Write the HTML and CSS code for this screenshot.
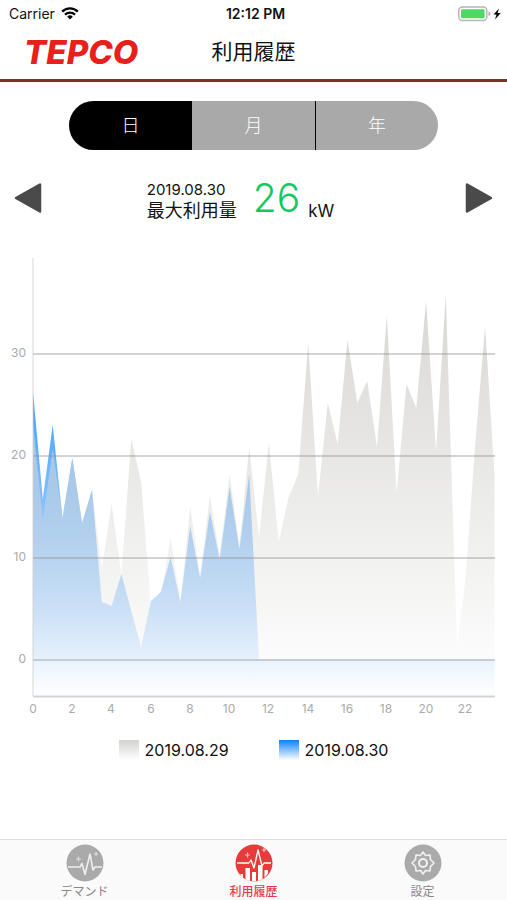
FILE: index.html
```html
<!DOCTYPE html>
<html lang="ja">
<head>
<meta charset="utf-8">
<meta name="viewport" content="width=device-width, initial-scale=1">
<title>利用履歴</title>
<link rel="stylesheet" href="styles.css">
</head>
<body>
<div class="status">
  <div class="status-side">Carrier
    <svg width="18" height="13" viewBox="0 0 18 13"><g fill="none" stroke="#000" stroke-width="2.3"><path d="M1.2 4.6a11 11 0 0 1 15.6 0"/><path d="M4 7.6a7.1 7.1 0 0 1 10 0"/></g><path d="M9 12.600l-2.800-2.900a4 4 0 0 1 5.600 0z"/></svg>
  </div>
  <div class="status-time">12:12 PM</div>
  <div class="status-side status-end">
    <svg width="44" height="16" viewBox="0 0 44 16"><rect x=".8" y="1" width="28" height="13.500" rx="3.500" fill="#fff" stroke="#b4b4b4" stroke-width="1.400"/><rect x="3" y="3.300" width="23.600" height="9" rx="1.200" fill="#4cd964"/><path d="M30.500 5.500q2 .5 2 2.300t-2 2.300z" fill="#aaa"/><path d="M41 2.500l-5.500 6h3l-1.500 5 5.800-6.500h-3.200z"/></svg>
  </div>
</div>
<header class="header">
  <div class="logo">TEPCO</div>
  <h1 class="title">利用履歴</h1>
</header>
<main class="main">
  <div class="segments">
    <button class="segment segment-on" type="button">日</button>
    <button class="segment" type="button">月</button>
    <button class="segment" type="button">年</button>
  </div>
  <section class="summary">
    <button class="arrow" type="button" aria-label="前の日"><svg width="28" height="32" viewBox="0 0 28 32"><path d="M2 16L26 2.500v27z" fill="#4a4a4a" stroke="#4a4a4a" stroke-width="2.500" stroke-linejoin="round"/></svg></button>
    <div class="reading">
      <div class="reading-label"><div class="date">2019.08.30</div><div class="name">最大利用量</div></div>
      <div class="value">26</div>
      <div class="unit">kW</div>
    </div>
    <button class="arrow" type="button" aria-label="次の日"><svg width="28" height="32" viewBox="0 0 28 32"><path d="M26 16L2 2.500v27z" fill="#4a4a4a" stroke="#4a4a4a" stroke-width="2.500" stroke-linejoin="round"/></svg></button>
  </section>
  <svg class="chart" viewBox="0 250 507 470" role="img" aria-label="利用履歴">
    <defs>
      <linearGradient id="blue" gradientUnits="userSpaceOnUse" x1="0" y1="295" x2="0" y2="696"><stop offset="0" stop-color="#007dff"/><stop offset="1" stop-color="#007dff" stop-opacity="0"/></linearGradient>
      <linearGradient id="grey" gradientUnits="userSpaceOnUse" x1="0" y1="295" x2="0" y2="659"><stop offset="0" stop-color="#d8d7d4"/><stop offset="1" stop-color="#d8d7d4" stop-opacity=".08"/></linearGradient>
    </defs>
    <path fill="url(#blue)" d="M33 696V392L42.800 499 52.700 425 62.500 518 72.300 458 82.100 523 92 490 101.800 602 111.600 606 121.400 574 131.300 611 141.100 647 150.900 601 160.800 592 170.600 557 180.400 602 190.200 526 200.100 578 209.900 512 219.700 559 229.600 487 239.400 549 249.200 474 259 659.500H494.500V696z"/>
    <path fill="url(#grey)" d="M33 659.500V423L42.800 520 52.700 449 62.500 518 72.300 459 82.100 523 92 491 101.800 568 111.600 504 121.400 575 131.300 439 141.100 482 150.900 605 160.800 596 170.600 538 180.400 600 190.200 507 200.100 575 209.900 496 219.700 555 229.600 475 239.400 545 249.200 448 259 537 268.900 443 278.700 542 288.500 498 298.300 474 308.200 343 318 497 327.800 403 337.700 444 347.500 340 357.300 403 367.200 381 377 447 386.800 316 396.600 493 406.500 384 416.300 408 426.100 301 436 451 445.800 295 457 647 465.400 580 475.300 443 485.100 327 494.500 475V659.500z"/>
    <g class="grid"><path d="M33 354H495M33 456H495M33 558H495M33 660H495M33 696.500H495"/><path class="axis" d="M33 258V696"/></g>
    <g class="ticks ticks-y"><text x="26" y="357">30</text><text x="26" y="459">20</text><text x="26" y="561">10</text><text x="26" y="663">0</text></g>
    <g class="ticks ticks-x"><text x="33" y="713">0</text><text x="72" y="713">2</text><text x="111" y="713">4</text><text x="151" y="713">6</text><text x="190" y="713">8</text><text x="229" y="713">10</text><text x="268" y="713">12</text><text x="308" y="713">14</text><text x="347" y="713">16</text><text x="386" y="713">18</text><text x="426" y="713">20</text><text x="465" y="713">22</text></g>
  </svg>
  <div class="legend">
    <div class="key"><span class="swatch swatch-grey"></span>2019.08.29</div>
    <div class="key"><span class="swatch swatch-blue"></span>2019.08.30</div>
  </div>
</main>
<nav class="tabs">
  <a class="tab" href="#demand">
    <svg width="38" height="38" viewBox="0 0 38 38"><circle cx="19" cy="19" r="18.500" fill="#aaa"/><path d="M2 23H14l2-3.500 3 11L24 10l3 16 2-3H36" fill="none" stroke="#eee" stroke-width="1.600" stroke-linejoin="round"/><path d="M10 15h5M12.500 12.500v5M28 10h4M30 8v4" stroke="#ddd" stroke-width="1.200"/></svg>
    デマンド</a>
  <a class="tab tab-on" href="#history">
    <svg width="38" height="38" viewBox="0 0 38 38"><circle cx="19" cy="19" r="18.500" fill="#e73b3b"/><path d="M2 19H14l2-3 3 8L23 6l4 16 2-3H36" fill="none" stroke="#fff" stroke-width="1.300" stroke-linejoin="round"/><path d="M5.500 31.500V30H8v4zM10.500 35.400V24H15v13zM17 37.300V28h4v9.300zM23 37V21h4.500v14.300zM29.500 33.800V26H33v3.500z" fill="#fff"/><path d="M10 11h5M12.500 8.500v5M27 6h4M29 4v4" stroke="#fbb" stroke-width="1.200"/></svg>
    利用履歴</a>
  <a class="tab" href="#settings">
    <svg width="38" height="38" viewBox="0 0 38 38"><circle cx="19" cy="19" r="18.500" fill="#aaa"/><g fill="none" stroke="#f2f2f2" stroke-width="1.600" stroke-linejoin="round"><path d="M19 8l2.500 3.500 4.500-.5.500 4.500L30 19l-3.500 3.500L26 27l-4.500-.5L19 30l-2.500-3.500L12 27l-.5-4.500L8 19l3.500-3.500L12 11l4.500.5z"/><circle cx="19" cy="19" r="4" stroke-width="2"/></g></svg>
    設定</a>
</nav>
</body>
</html>
```
FILE: styles.css
```css
* { box-sizing: border-box; }

body {
  margin: 0;
  min-height: 100vh;
  display: flex;
  flex-direction: column;
  background: #fff;
  color: #111;
  font-family: Inter, "Noto Sans CJK JP", sans-serif;
}

button {
  border: 0;
  padding: 0;
  font: inherit;
}

svg { display: block; }

.status {
  display: flex;
  align-items: center;
  height: 27px;
  padding: 0 5px 0 9px;
  font-size: 14px;
}

.status-side {
  flex: 1;
  display: flex;
  align-items: center;
  gap: 6px;
}

.status-end { justify-content: flex-end; }

.status-time { font-weight: 600; }

.header {
  display: grid;
  grid-template-columns: 1fr auto 1fr;
  align-items: center;
  height: 55px;
  padding: 0 24px 2px;
  border-bottom: 3px solid #7e2f28;
}

.logo {
  color: #e8201c;
  font-size: 33px;
  font-weight: 800;
  font-style: italic;
  line-height: 40px;
}

.title {
  margin: 0;
  font-size: 21px;
  font-weight: 400;
  line-height: 32px;
}

.main { flex: 1; }

.segments {
  display: grid;
  grid-template-columns: repeat(3, 1fr);
  height: 49px;
  margin: 19px 69px 0;
  overflow: hidden;
  border-radius: 25px;
}

.segment {
  padding-bottom: 3px;
  background: #a9a9a9;
  color: #fff;
  font-size: 18px;
  font-weight: 300;
}

.segment-on { background: #000; }

.segment:last-child { border-left: 1px solid #000; }

.summary {
  display: flex;
  align-items: center;
  justify-content: space-between;
  height: 48px;
  margin-top: 24px;
  padding: 0 14px;
}

.arrow { background: none; }

.reading {
  display: flex;
  align-items: flex-end;
  padding-right: 26px;
}

.date {
  font-size: 15px;
  line-height: 20px;
}

.name {
  font-size: 18px;
  line-height: 22px;
}

.value {
  margin: 0 8px 0 16px;
  color: #12c95f;
  font-size: 39px;
  font-weight: 350;
  line-height: 48px;
}

.unit {
  font-size: 17px;
  line-height: 22px;
}

.chart {
  width: 100%;
  height: auto;
  margin-top: 28px;
}

.grid {
  fill: none;
  stroke: #909090;
  stroke-width: 2px;
  stroke-opacity: .4;
}

.grid .axis {
  stroke: #ccc;
}

.ticks {
  fill: #aaa;
  font-size: 12px;
}

.ticks-y { text-anchor: end; }

.ticks-x { text-anchor: middle; }

.legend {
  display: flex;
  justify-content: center;
  gap: 50px;
  margin-top: 20px;
  font-size: 16px;
  line-height: 20px;
}

.key {
  display: flex;
  align-items: center;
  gap: 6px;
}

.swatch {
  width: 20px;
  height: 20px;
}

.swatch-grey { background: linear-gradient(#d3d2ce, #fff); }

.swatch-blue { background: linear-gradient(#0a80ff, #fff); }

.tabs {
  display: grid;
  grid-template-columns: repeat(3, 1fr);
  height: 61px;
  border-top: 1px solid #ddd;
  background: #fafafa;
}

.tab {
  display: flex;
  flex-direction: column;
  align-items: center;
  padding-top: 4px;
  color: #888;
  font-size: 12px;
  line-height: 20px;
  text-decoration: none;
}

.tab-on {
  color: #e73b4b;
  font-weight: 500;
}
```
